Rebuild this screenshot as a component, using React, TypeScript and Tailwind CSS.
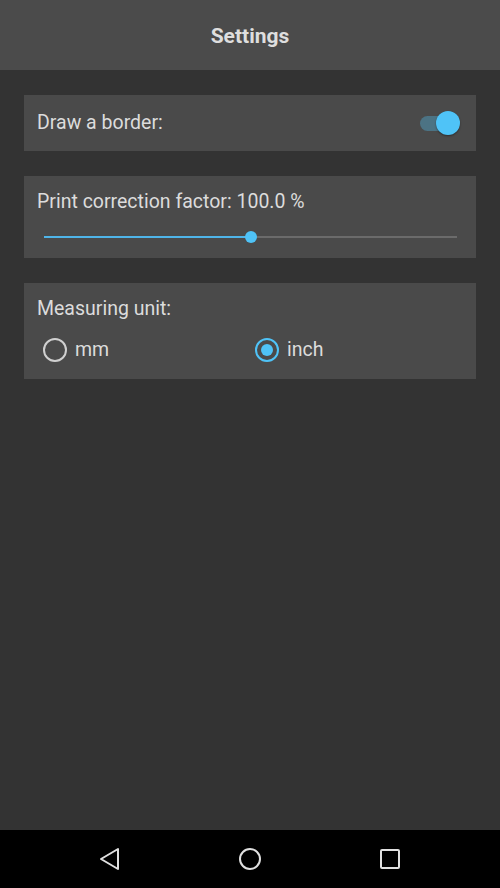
import React from "react";

export default function App() {
  const font = { fontFamily: "Roboto, 'Noto Sans', sans-serif" };
  return (
    <div className="w-[500px] h-[888px] flex flex-col bg-[#333333] text-[#dcdcdc]" style={font}>
      <div className="h-[70px] bg-[#4b4b4b] flex items-center justify-center shrink-0">
        <span className="text-[21px] font-bold text-[#dedede] leading-[28px] mt-[2px]">Settings</span>
      </div>
      <div className="flex-1 flex flex-col gap-[25px] px-[24px] pt-[25px]">
        <div className="h-[56px] bg-[#4a4a4a] flex items-center justify-between pl-[13px] pr-[16px]">
          <span className="text-[19.5px] leading-[24px]">Draw a border:</span>
          <div className="relative w-[40px] h-[24px] flex items-center">
            <div className="w-[36px] h-[15px] rounded-full bg-[#4c7384]" />
            <div className="absolute right-0 top-0 w-[24px] h-[24px] rounded-full bg-[#4fc3f7] shadow-[0_1px_2px_rgba(0,0,0,0.4)]" />
          </div>
        </div>
        <div className="h-[82px] bg-[#4a4a4a] flex flex-col pl-[13px] pr-[19px] pt-[14px]">
          <span className="text-[19.5px] leading-[24px]">Print correction factor: 100.0 %</span>
          <div className="relative h-[12px] mt-[17px] ml-[7px] flex items-center">
            <div className="h-[2px] w-1/2 bg-[#4fb5e9]" />
            <div className="h-[2px] flex-1 bg-[#6b6b6b]" />
            <div className="absolute left-1/2 top-0 -ml-[6px] w-[12px] h-[12px] rounded-full bg-[#4fc3f7]" />
          </div>
        </div>
        <div className="h-[96px] bg-[#4a4a4a] flex flex-col pl-[13px] pt-[14px]">
          <span className="text-[19.5px] leading-[24px]">Measuring unit:</span>
          <div className="flex mt-[14px] ml-[6px]">
            <div className="w-[212px] flex items-center gap-[8px]">
              <div className="w-[24px] h-[24px] rounded-full border-2 border-[#d0d0d0]" />
              <span className="text-[19.5px]">mm</span>
            </div>
            <div className="flex items-center gap-[8px]">
              <div className="w-[24px] h-[24px] rounded-full border-2 border-[#4fc3f7] flex items-center justify-center">
                <div className="w-[12px] h-[12px] rounded-full bg-[#4fc3f7]" />
              </div>
              <span className="text-[19.5px]">inch</span>
            </div>
          </div>
        </div>
      </div>
      <div className="h-[58px] bg-black flex items-center justify-center gap-[116px] shrink-0">
        <svg width="24" height="24" viewBox="0 0 24 24" fill="none" stroke="#e0e0e0" strokeWidth="2" strokeLinejoin="round">
          <path d="M20 2 L20 22 L3 12 Z" />
        </svg>
        <svg width="24" height="24" viewBox="0 0 24 24" fill="none" stroke="#e0e0e0" strokeWidth="2">
          <circle cx="12" cy="12" r="10" />
        </svg>
        <svg width="24" height="24" viewBox="0 0 24 24" fill="none" stroke="#e0e0e0" strokeWidth="2" strokeLinejoin="round">
          <rect x="3" y="3" width="18" height="18" rx="1" />
        </svg>
      </div>
    </div>
  );
}
